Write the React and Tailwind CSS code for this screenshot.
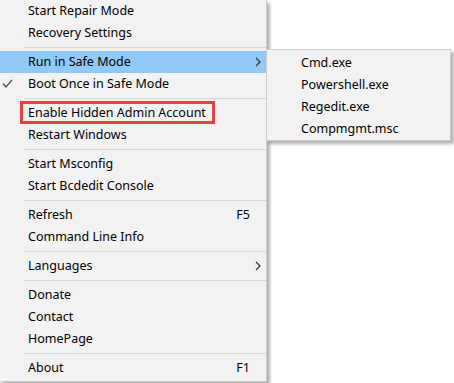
import React from "react";

const mainItems = [
  { label: "Start Repair Mode" },
  { label: "Recovery Settings" },
  { sep: true },
  { label: "Run in Safe Mode", active: true, arrow: true },
  { label: "Boot Once in Safe Mode", checked: true },
  { sep: true },
  { label: "Enable Hidden Admin Account" },
  { label: "Restart Windows" },
  { sep: true },
  { label: "Start Msconfig" },
  { label: "Start Bcdedit Console" },
  { sep: true },
  { label: "Refresh", shortcut: "F5" },
  { label: "Command Line Info" },
  { sep: true },
  { label: "Languages", arrow: true },
  { sep: true },
  { label: "Donate" },
  { label: "Contact" },
  { label: "HomePage" },
  { sep: true },
  { label: "About", shortcut: "F1" },
];

const subItems = ["Cmd.exe", "Powershell.exe", "Regedit.exe", "Compmgmt.msc"];

function Chevron() {
  return (
    <svg width="6" height="10" viewBox="0 0 6 10" className="absolute left-[255px] top-[6px]">
      <path d="M1 1 L5 5 L1 9" fill="none" stroke="#333" strokeWidth="1.2" />
    </svg>
  );
}

function Check() {
  return (
    <svg width="16" height="22" viewBox="0 0 16 22" className="absolute left-0 top-0">
      <polyline points="3,10.5 6,14 12,7" fill="none" stroke="#4d4d4d" strokeWidth="1.3" />
    </svg>
  );
}

function MenuRow({ item }) {
  if (item.sep) {
    return (
      <div className="h-[7px] pt-[3px]">
        <div className="ml-[24px] h-px bg-[#d7d7d7]" />
      </div>
    );
  }
  return (
    <div
      className={`relative flex h-[22px] items-center pl-[28px] pr-[16px] ${
        item.active ? "bg-[#91c9f7]" : ""
      }`}
    >
      {item.checked && <Check />}
      <span className="flex-1">{item.label}</span>
      {item.shortcut && <span>{item.shortcut}</span>}
      {item.arrow && <Chevron />}
    </div>
  );
}

export default function App() {
  return (
    <div
      className="relative h-[383px] w-[454px] overflow-hidden bg-white text-[12.5px] text-black"
      style={{ fontFamily: '"Noto Sans", "Open Sans", sans-serif' }}
    >
      <div className="w-[267px] border-r border-b border-[#cccccc] bg-[#f2f2f2] pb-[2px] shadow-[3px_3px_3px_rgba(0,0,0,0.3)]">
        {mainItems.map((item, i) => (
          <MenuRow key={i} item={item} />
        ))}
      </div>

      {/* highlighted entry */}
      <div className="absolute left-[20px] top-[101px] h-[23px] w-[195px] border-[3px] border-[#e0463f]" />

      {/* submenu */}
      <div className="absolute left-[266px] top-[49px] w-[185px] border border-[#cccccc] bg-[#f2f2f2] pt-[2px] shadow-[3px_3px_3px_rgba(0,0,0,0.3)]">
        {subItems.map((s) => (
          <div key={s} className="flex h-[22px] items-center pl-[34px]">
            {s}
          </div>
        ))}
      </div>
    </div>
  );
}
